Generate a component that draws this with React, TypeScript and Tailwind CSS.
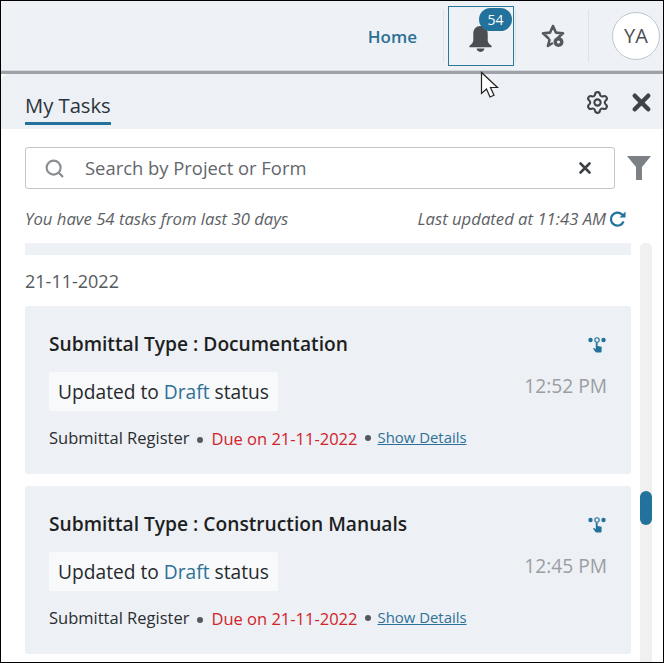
import { Search, Settings, X } from 'lucide-react'

const font = { fontFamily: '"Open Sans", sans-serif' }

function TaskCard({ title, time }: { title: string; time: string }) {
  return (
    <div className="relative h-[168px] shrink-0 rounded-[3px] bg-[#edf0f4] pl-6 pr-6 pt-[24px]">
      <p className="text-[19.2px] leading-[28px] font-semibold text-[#1d1f22]">{title}</p>
      <div className="mt-[14px] flex h-[39px] w-[229px] items-center rounded-[2px] bg-[#f7f9fa] pl-[9px] pt-[1px] text-[19.2px] text-[#26292c]">
        <span>Updated to&nbsp;</span>
        <span className="text-[#2d7198]">Draft</span>
        <span>&nbsp;status</span>
      </div>
      <div className="mt-[14px] flex items-center text-[16.5px] leading-[24px]">
        <span className="text-[#2b2e31]">Submittal Register</span>
        <span className="mt-[3px] ml-[8px] mr-[8px] h-[6px] w-[6px] rounded-full bg-[#55595e]" />
        <span className="mt-[2px] text-[#d2222a]">Due on 21-11-2022</span>
        <span className="ml-[7px] mr-[7px] h-[6px] w-[6px] rounded-full bg-[#55595e]" />
        <span className="mt-[-2px] text-[14.9px] text-[#2d7198] underline">Show Details</span>
      </div>
      <span className="absolute right-6 top-[67px] text-[19.2px] leading-[26px] text-[#9a9ea3]">{time}</span>
      <svg className="absolute right-[24px] top-[29px]" width="20" height="20" viewBox="0 0 20 20">
        <circle cx="3.5" cy="5" r="2.2" fill="#23729b" />
        <circle cx="16.5" cy="5" r="2.2" fill="#23729b" />
        <circle cx="10" cy="5" r="2.2" fill="none" stroke="#23729b" strokeWidth="1.1" />
        <path d="M8.8 7.5h1.8v3.6l4 .7v4.2c0 1-.6 1.5-1.5 1.5H9.6c-.6 0-1-.3-1.3-.8L6 13.6l1.2-.7 1.6 1.3z" fill="#23729b" />
      </svg>
    </div>
  )
}

export default function App() {
  return (
    <div style={font} className="relative h-[663px] w-[664px] overflow-hidden border border-black bg-white">
      {/* top nav */}
      <div className="flex h-[69px] items-center justify-end bg-[#eef2f7]">
        <span className="mr-[26px] mt-[2px] text-[17px] font-semibold text-[#2d6f93]">Home</span>
        <div className="h-[52px] w-px bg-[#dfe2e6]" />
        <div className="relative ml-[4px] flex h-[60px] w-[66px] items-center justify-center border border-[#2f7596]">
          <svg className="mt-[5px] ml-[-1px]" width="25" height="29" viewBox="0 0 26 30">
            <path d="M13 2c4.800 0 7.500 3.500 7.500 8v7c0 2 1.500 3.500 4 5.500v1.500H1.500v-1.500c2.500-2 4-3.500 4-5.500v-7C5.500 5.500 8.200 2 13 2z" fill="#4b4e53" />
            <path d="M9 25.500h8c0 2-1.800 3.500-4 3.500s-4-1.500-4-3.500z" fill="#4b4e53" />
          </svg>
          <span className="absolute right-[1px] top-[1px] flex h-[23px] w-[33px] items-center justify-center rounded-full bg-[#23729b] text-[14px] text-white">54</span>
        </div>
        <div className="ml-[1px] h-[52px] w-px bg-[#dfe2e6]" />
        <div className="flex w-[72px] items-center justify-center pl-[1px] pt-[1px]">
          <svg width="26" height="26" viewBox="0 0 26 26" fill="none">
            <path d="M13 3l2.900 6.600 7.100.7-4.500 4M9.500 17l-1.600 6 4.100-2.500M13 3l-2.900 6.600-7.100.7 5.400 4.900" stroke="#55595e" strokeWidth="2.600" strokeLinejoin="round" strokeLinecap="round" />
            <circle cx="18.500" cy="19" r="5" fill="#55595e" />
            <circle cx="18.500" cy="19" r="1.600" fill="#eef2f7" />
          </svg>
        </div>
        <div className="h-[52px] w-px bg-[#dfe2e6]" />
        <div className="ml-[23px] mr-[3px] flex h-[48px] w-[48px] items-center justify-center rounded-full border border-[#bfc6cc] bg-white text-[20px] text-[#4a4d51]">YA</div>
      </div>
      <div className="h-[4px] border-b-[3px] border-[#9ea2a8] bg-[#d5d8dc]" />

      {/* panel header */}
      <div className="relative flex h-[55px] items-start justify-between rounded-tl-[8px] bg-[#edf0f4] pl-6 pr-[8px] pt-[15px]">
        <span className="border-b-[3px] border-[#23729b] text-[20.2px] leading-[33px] font-medium text-[#2a3440]">My Tasks</span>
        <div className="flex items-center gap-[18px]">
          <Settings size={25} stroke="#3f4347" strokeWidth={2} />
          <X size={27} stroke="#3f4347" strokeWidth={4} />
        </div>
      </div>

      {/* search */}
      <div className="mt-[18px] flex items-center pl-6">
        <div className="flex h-[42px] w-[590px] items-center rounded-[3px] border border-[#c2c5c9] pl-[18px] pr-[20px]">
          <Search size={21} stroke="#8b8f94" strokeWidth={2.500} />
          <span className="ml-[20px] flex-1 text-[18.4px] text-[#63676b]">Search by Project or Form</span>
          <X size={18} stroke="#3f4347" strokeWidth={3.500} />
        </div>
        <svg className="ml-[11px]" width="26" height="26" viewBox="0 0 26 26">
          <path d="M1 1h24l-9 11v13h-6V12z" fill="#7d8185" />
        </svg>
      </div>

      {/* counts */}
      <div className="mt-[18px] flex items-center pl-6 text-[16.7px] leading-[24px] text-[#5d6166] italic">
        <span>You have 54 tasks from last 30 days</span>
        <span className="ml-auto">Last updated at 11:43 AM</span>
        <svg className="ml-[3px] mr-[36px]" width="18" height="18" viewBox="0 0 18 18" fill="none">
          <path d="M14.500 11.500A6.500 6.500 0 1 1 13 4.500L15 6" stroke="#23729b" strokeWidth="2.200" />
          <path d="M16.500 1.500v6h-6z" fill="#23729b" />
        </svg>
      </div>

      {/* task list */}
      <div className="relative mt-[12px] flex h-[420px] flex-col overflow-hidden pl-6 pr-[32px]">
        <div className="h-[12px] w-[606px] shrink-0 bg-[#edf0f4]" />
        <p className="mt-[14px] text-[18px] leading-[25px] text-[#55595e]">21-11-2022</p>
        <div className="mt-[12px] flex flex-col gap-[12px]">
          <TaskCard title="Submittal Type : Documentation" time="12:52 PM" />
          <TaskCard title="Submittal Type : Construction Manuals" time="12:45 PM" />
        </div>
        <div className="absolute bottom-0 right-[11px] top-0 w-[12px] rounded-t-[5px] bg-[#f0f0f0]">
          <div className="absolute top-[248px] h-[34px] w-[12px] rounded-[6px] bg-[#23729b]" />
        </div>
      </div>

      {/* mouse pointer */}
      <svg className="absolute left-[479px] top-[70px]" width="22" height="30" viewBox="0 0 22 30">
        <path d="M1.500 1.500v21l5-4.500 3.500 8 4-1.800-3.500-7.700h7z" fill="#fff" stroke="#222" strokeWidth="1.200" />
      </svg>
    </div>
  )
}
